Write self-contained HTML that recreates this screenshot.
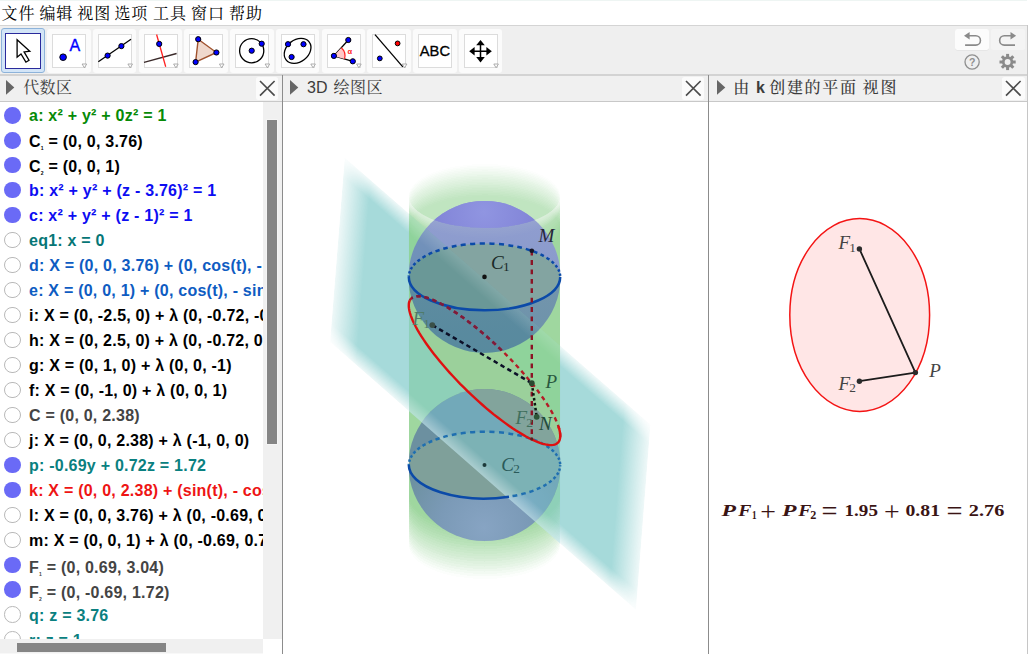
<!DOCTYPE html><html><head><meta charset="utf-8"><title>GeoGebra</title><style>
html,body{margin:0;padding:0;background:#fff;}
body{width:1029px;height:654px;overflow:hidden;position:relative;font-family:"Liberation Sans",sans-serif;}
.abs{position:absolute;}
#menu{position:absolute;left:0;top:0;width:1029px;height:25px;background:#fff;}
#menu span{position:absolute;top:2px;font:16px/24px "Liberation Sans","Noto Serif CJK SC",serif;color:#000;white-space:nowrap;letter-spacing:0.9px;margin-left:-1px}
#tb{position:absolute;left:0;top:25px;width:1027px;height:51px;background:#efefef;border-top:1px solid #d4d4d4;border-bottom:2px solid #d3d3d3;box-sizing:border-box;}
.btn{position:absolute;top:28.5px;width:43.5px;height:44.5px;background:#fbfbfb;border-radius:3px;box-sizing:border-box;}
.btn .in{position:absolute;left:5px;top:5.5px;width:34px;height:34px;box-sizing:border-box;border:1px solid #dcdcdc;background:#fff;}
.btn.sel{background:#d3e5f7;border:1px solid #8db3da;margin-left:-0.5px;width:44.5px;top:28.2px;height:45.2px;}
.btn.sel .in{left:3.4px;top:3.5px;width:35.8px;height:36px;border:1.75px solid #2a2a9c;}
.hdr{position:absolute;top:76px;height:25px;background:#f0f0f0;border-bottom:1px solid #c8c8c8;box-sizing:content-box;}
.hdr .t{position:absolute;top:0;font:16px/24px "Liberation Sans","Noto Serif CJK SC",serif;color:#3c3c3c;white-space:nowrap;}
.xb{position:absolute;top:77px;width:22.5px;height:22.5px;background:#fbfbfb;border-radius:2.5px;}
.row{position:absolute;left:29px;font:bold 16px/20px "Liberation Sans",sans-serif;white-space:nowrap;letter-spacing:0.23px;}
.row sub{font-size:5px;line-height:0;vertical-align:-3px;font-weight:bold;}
.mk{position:absolute;left:4px;width:16.5px;height:16.5px;border-radius:50%;box-sizing:border-box;}
.mk.on{background:#6a6af6;}
.mk.off{background:#fff;border:1.3px solid #b9b9b9;}
</style></head><body>
<div id="menu"><span style="left:2.5px">文件</span><span style="left:40.4px">编辑</span><span style="left:78.3px">视图</span><span style="left:115.4px">选项</span><span style="left:154px">工具</span><span style="left:192px">窗口</span><span style="left:230px">帮助</span></div>
<div id="tb"></div>
<div class="abs" style="left:0;top:0;width:1027px;height:1px;background:#eef5f3"></div>
<div class="btn sel" style="left:1.2px"><div class="in"></div></div>
<div class="btn" style="left:47.0px"><div class="in"></div></div>
<div class="btn" style="left:92.8px"><div class="in"></div></div>
<div class="btn" style="left:138.5px"><div class="in"></div></div>
<div class="btn" style="left:184.2px"><div class="in"></div></div>
<div class="btn" style="left:230.0px"><div class="in"></div></div>
<div class="btn" style="left:275.8px"><div class="in"></div></div>
<div class="btn" style="left:321.5px"><div class="in"></div></div>
<div class="btn" style="left:367.2px"><div class="in"></div></div>
<div class="btn" style="left:413.0px"><div class="in"></div></div>
<div class="btn" style="left:458.8px"><div class="in"></div></div>
<svg class="abs" style="left:0;top:0" width="520" height="76" viewBox="0 0 520 76"><path d="M17.1 39.8V57.2L21 53.9L25.9 62.2L29 60.2L24.1 51.9L29.8 51.2Z" fill="#fff" stroke="#000" stroke-width="1.3" stroke-linejoin="miter"/><circle cx="63.1" cy="57.2" r="3.3" fill="#0000ff" stroke="#000" stroke-width="1"/><text x="69.4" y="50.9" font-family='"Liberation Sans", sans-serif' font-size="16" fill="#0000ff" stroke="#0000ff" stroke-width="0.35">A</text><path d="M82.1 64.0h4.6l-2.3 3.8z" fill="#fff" stroke="#9a9a9a" stroke-width="0.8"/><path d="M98.3 61.8L131 39.2" stroke="#000" stroke-width="1.25"/><circle cx="107.6" cy="55.6" r="2.6" fill="#0000ff" stroke="#000" stroke-width="1"/><circle cx="121.4" cy="46.1" r="2.6" fill="#0000ff" stroke="#000" stroke-width="1"/><path d="M127.9 64.0h4.6l-2.3 3.8z" fill="#fff" stroke="#9a9a9a" stroke-width="0.8"/><path d="M144 62.4L176.6 53.5" stroke="#3a2a2a" stroke-width="1.3"/><path d="M156.6 34.5L165.7 66.8" stroke="#ff2020" stroke-width="1.3"/><circle cx="159.2" cy="43.9" r="2.6" fill="#0000ff" stroke="#000" stroke-width="1"/><path d="M173.6 64.0h4.6l-2.3 3.8z" fill="#fff" stroke="#9a9a9a" stroke-width="0.8"/><path d="M198.2 39.2L216.4 52.5L195.6 62.1Z" fill="#efd8cc" stroke="#a0522d" stroke-width="1.4"/><circle cx="198.2" cy="39.2" r="2.6" fill="#0000ff" stroke="#000" stroke-width="1"/><circle cx="216.4" cy="52.5" r="2.6" fill="#0000ff" stroke="#000" stroke-width="1"/><circle cx="195.6" cy="62.1" r="2.6" fill="#0000ff" stroke="#000" stroke-width="1"/><path d="M219.4 64.0h4.6l-2.3 3.8z" fill="#fff" stroke="#9a9a9a" stroke-width="0.8"/><circle cx="251.7" cy="50.7" r="12.1" fill="none" stroke="#000" stroke-width="1.3"/><circle cx="251.7" cy="50.7" r="2.6" fill="#0000ff" stroke="#000" stroke-width="1"/><circle cx="261.7" cy="43.7" r="2.6" fill="#0000ff" stroke="#000" stroke-width="1"/><path d="M265.1 64.0h4.6l-2.3 3.8z" fill="#fff" stroke="#9a9a9a" stroke-width="0.8"/><ellipse cx="297.6" cy="50.8" rx="14.6" ry="11" transform="rotate(-38 297.6 50.8)" fill="none" stroke="#000" stroke-width="1.3"/><circle cx="288" cy="44.2" r="2.6" fill="#0000ff" stroke="#000" stroke-width="1"/><circle cx="303.5" cy="44.2" r="2.6" fill="#0000ff" stroke="#000" stroke-width="1"/><circle cx="291.6" cy="57" r="2.6" fill="#0000ff" stroke="#000" stroke-width="1"/><path d="M310.8 64.0h4.6l-2.3 3.8z" fill="#fff" stroke="#9a9a9a" stroke-width="0.8"/><path d="M333.9 55.9L348.3 40" stroke="#000" stroke-width="1.3"/><path d="M333.9 55.9L352.8 61.3" stroke="#000" stroke-width="1.3"/><path d="M333.9 55.9L341.3 47.7A11 11 0 0 1 344.5 58.9Z" fill="#ffc8c8" stroke="none"/><path d="M341.3 47.7A11 11 0 0 1 344.5 58.9" fill="none" stroke="#ff2020" stroke-width="1.2"/><circle cx="333.9" cy="55.9" r="2.6" fill="#0000ff" stroke="#000" stroke-width="1"/><circle cx="348.3" cy="40" r="2.6" fill="#0000ff" stroke="#000" stroke-width="1"/><circle cx="352.8" cy="61.3" r="2.6" fill="#0000ff" stroke="#000" stroke-width="1"/><text x="347.6" y="53.8" font-family='"Liberation Sans", sans-serif' font-size="7.5" font-weight="bold" fill="#ff2020">α</text><path d="M356.6 64.0h4.6l-2.3 3.8z" fill="#fff" stroke="#9a9a9a" stroke-width="0.8"/><path d="M375 34.6L402.8 66.8" stroke="#000" stroke-width="1.3"/><circle cx="397.6" cy="43.4" r="2.4" fill="#ff0000" stroke="#000" stroke-width="1"/><circle cx="379.8" cy="58.4" r="2.4" fill="#0000ff" stroke="#000" stroke-width="1"/><path d="M402.3 64.0h4.6l-2.3 3.8z" fill="#fff" stroke="#9a9a9a" stroke-width="0.8"/><text x="419.8" y="56.2" font-family='"Liberation Sans", sans-serif' font-size="14.6" fill="#000" textLength="30.2" lengthAdjust="spacingAndGlyphs" stroke="#000" stroke-width="0.3">ABC</text><path d="M472.5 51.2H488.5M480.5 43.2V59.2" stroke="#000" stroke-width="1.5"/><path d="M491.8 51.2l-5.4 -4.3v8.6z" fill="#000" transform="rotate(0 480.5 51.2)"/><path d="M491.8 51.2l-5.4 -4.3v8.6z" fill="#000" transform="rotate(90 480.5 51.2)"/><path d="M491.8 51.2l-5.4 -4.3v8.6z" fill="#000" transform="rotate(180 480.5 51.2)"/><path d="M491.8 51.2l-5.4 -4.3v8.6z" fill="#000" transform="rotate(270 480.5 51.2)"/><path d="M493.8 64.0h4.6l-2.3 3.8z" fill="#fff" stroke="#9a9a9a" stroke-width="0.8"/></svg>
<div class="abs" style="left:955.3px;top:28.5px;width:33.8px;height:21.5px;background:#fcfcfc;border-radius:2.5px;box-shadow:0 0.5px 0.5px #ddd"></div>
<div class="abs" style="left:991.2px;top:28.5px;width:33.8px;height:21.5px;background:#f4f4f4;border-radius:2.5px;"></div>
<svg class="abs" style="left:0;top:0" width="1029" height="76" viewBox="0 0 1029 76"><path d="M966.5 35.8H975.8A4.65 4.65 0 0 1 975.8 45.1H965.1" fill="none" stroke="#8a8a8a" stroke-width="1.6"/><path d="M969.6 32V39.6L964 35.8Z" fill="#8a8a8a"/><path d="M1013.6 35.8H1004.3A4.65 4.65 0 0 0 1004.3 45.1H1015" fill="none" stroke="#8a8a8a" stroke-width="1.6"/><path d="M1010.5 32V39.6L1016.1 35.8Z" fill="#8a8a8a"/><circle cx="972.1" cy="62" r="7.1" fill="none" stroke="#8f8f8f" stroke-width="1.3"/><text x="972.1" y="65.8" text-anchor="middle" font-family='"Liberation Sans", sans-serif' font-size="10.5" font-weight="bold" fill="#8f8f8f">?</text><circle cx="1007.6" cy="62" r="4.3" fill="none" stroke="#8a8a8a" stroke-width="2.7"/><rect x="1006.1" y="53.9" width="3" height="3.4" fill="#8a8a8a" transform="rotate(0 1007.6 62)"/><rect x="1006.1" y="53.9" width="3" height="3.4" fill="#8a8a8a" transform="rotate(45 1007.6 62)"/><rect x="1006.1" y="53.9" width="3" height="3.4" fill="#8a8a8a" transform="rotate(90 1007.6 62)"/><rect x="1006.1" y="53.9" width="3" height="3.4" fill="#8a8a8a" transform="rotate(135 1007.6 62)"/><rect x="1006.1" y="53.9" width="3" height="3.4" fill="#8a8a8a" transform="rotate(180 1007.6 62)"/><rect x="1006.1" y="53.9" width="3" height="3.4" fill="#8a8a8a" transform="rotate(225 1007.6 62)"/><rect x="1006.1" y="53.9" width="3" height="3.4" fill="#8a8a8a" transform="rotate(270 1007.6 62)"/><rect x="1006.1" y="53.9" width="3" height="3.4" fill="#8a8a8a" transform="rotate(315 1007.6 62)"/></svg>
<div class="hdr" style="left:0;width:282px"><svg class="abs" style="left:5.9px;top:3.8px" width="9" height="16"><path d="M0 0L8.3 7.4L0 14.8Z" fill="#666"/></svg><span class="t" style="left:23.2px;letter-spacing:0.4px">代数区</span></div>
<div class="xb" style="left:255.6px"></div><svg class="abs" style="left:255.6px;top:77px" width="22.5" height="22.5"><path d="M4 4L18.6 18.6M18.6 4L4 18.6" stroke="#4c4c4c" stroke-width="1.65" fill="none"/></svg>
<div class="hdr" style="left:283px;width:425px"><svg class="abs" style="left:7.2px;top:3.8px" width="9" height="16"><path d="M0 0L8.3 7.4L0 14.8Z" fill="#666"/></svg><span class="t" style="left:24px">3D</span><span class="t" style="left:50.6px;letter-spacing:0.4px">绘图区</span></div>
<div class="xb" style="left:681.9px"></div><svg class="abs" style="left:681.9px;top:77px" width="22.5" height="22.5"><path d="M4 4L18.6 18.6M18.6 4L4 18.6" stroke="#4c4c4c" stroke-width="1.65" fill="none"/></svg>
<div class="hdr" style="left:709px;width:318px"><svg class="abs" style="left:7.8px;top:3.8px" width="9" height="16"><path d="M0 0L8.3 7.4L0 14.8Z" fill="#666"/></svg><span class="t" style="left:24.3px;font-weight:500;letter-spacing:1.3px">由</span><span class="t" style="left:46.9px"><b>k</b></span><span class="t" style="left:60.3px;font-weight:500;letter-spacing:1.65px">创建的平面</span><span class="t" style="left:153.6px;font-weight:500;letter-spacing:1.9px">视图</span></div>
<div class="xb" style="left:1002.3px"></div><svg class="abs" style="left:1002.3px;top:77px" width="22.5" height="22.5"><path d="M4 4L18.6 18.6M18.6 4L4 18.6" stroke="#4c4c4c" stroke-width="1.65" fill="none"/></svg>
<div class="abs" style="left:282px;top:75px;width:1.2px;height:579px;background:#8c8c8c"></div>
<div class="abs" style="left:707.8px;top:75px;width:1.2px;height:579px;background:#8c8c8c"></div>
<div class="abs" style="left:1027.1px;top:25px;width:1.2px;height:629px;background:#c6c6c6"></div>
<div class="abs" style="left:0;top:102px;width:263px;height:537px;overflow:hidden;background:#fff"><div class="mk on" style="top:5.05px"></div><div class="row" style="top:4.20px;color:#078a07">a: x² + y² + 0z² = 1</div><div class="mk on" style="top:30.02px"></div><div class="row" style="top:29.67px;color:#000">C<sub>1</sub> = (0, 0, 3.76)</div><div class="mk on" style="top:54.99px"></div><div class="row" style="top:54.64px;color:#000">C<sub>2</sub> = (0, 0, 1)</div><div class="mk on" style="top:79.96px"></div><div class="row" style="top:79.11px;color:#0d0df2">b: x² + y² + (z - 3.76)² = 1</div><div class="mk on" style="top:104.93px"></div><div class="row" style="top:104.08px;color:#0d0df2">c: x² + y² + (z - 1)² = 1</div><div class="mk off" style="top:129.90px"></div><div class="row" style="top:129.05px;color:#067676">eq1: x = 0</div><div class="mk off" style="top:154.87px"></div><div class="row" style="top:154.02px;color:#0e5cc2">d: X = (0, 0, 3.76) + (0, cos(t), - sin(t))</div><div class="mk off" style="top:179.84px"></div><div class="row" style="top:178.99px;color:#0e5cc2">e: X = (0, 0, 1) + (0, cos(t), - sin(t))</div><div class="mk off" style="top:204.81px"></div><div class="row" style="top:203.96px;color:#000">i: X = (0, -2.5, 0) + λ (0, -0.72, -0.69)</div><div class="mk off" style="top:229.78px"></div><div class="row" style="top:228.93px;color:#000">h: X = (0, 2.5, 0) + λ (0, -0.72, 0.69)</div><div class="mk off" style="top:254.75px"></div><div class="row" style="top:253.90px;color:#000">g: X = (0, 1, 0) + λ (0, 0, -1)</div><div class="mk off" style="top:279.72px"></div><div class="row" style="top:278.87px;color:#000">f: X = (0, -1, 0) + λ (0, 0, 1)</div><div class="mk off" style="top:304.69px"></div><div class="row" style="top:303.84px;color:#444">C = (0, 0, 2.38)</div><div class="mk off" style="top:329.66px"></div><div class="row" style="top:328.81px;color:#000">j: X = (0, 0, 2.38) + λ (-1, 0, 0)</div><div class="mk on" style="top:354.63px"></div><div class="row" style="top:353.78px;color:#0a8080">p: -0.69y + 0.72z = 1.72</div><div class="mk on" style="top:379.60px"></div><div class="row" style="top:378.75px;color:#ee1414">k: X = (0, 0, 2.38) + (sin(t), - cos(t), - 0.96cos(t))</div><div class="mk off" style="top:404.57px"></div><div class="row" style="top:403.72px;color:#000">l: X = (0, 0, 3.76) + λ (0, -0.69, 0.72)</div><div class="mk off" style="top:429.54px"></div><div class="row" style="top:428.69px;color:#000">m: X = (0, 0, 1) + λ (0, -0.69, 0.72)</div><div class="mk on" style="top:454.51px"></div><div class="row" style="top:455.86px;color:#444">F<sub>1</sub> = (0, 0.69, 3.04)</div><div class="mk on" style="top:479.48px"></div><div class="row" style="top:480.83px;color:#444">F<sub>2</sub> = (0, -0.69, 1.72)</div><div class="mk off" style="top:504.45px"></div><div class="row" style="top:503.60px;color:#0a8080">q: z = 3.76</div><div class="mk off" style="top:529.42px"></div><div class="row" style="top:528.57px;color:#0a8080">r: z = 1</div></div>
<div class="abs" style="left:263px;top:102px;width:18.8px;height:536.5px;background:#f0f0f0"></div>
<div class="abs" style="left:267px;top:120px;width:9.9px;height:324px;background:#858585;box-shadow:0 0 0 0.7px #f7f7f7"></div>
<div class="abs" style="left:0;top:639px;width:263px;height:13.5px;background:#f0f0f0"></div>
<div class="abs" style="left:0;top:652.5px;width:263px;height:1.5px;background:#f8f8f8"></div>
<div class="abs" style="left:16.6px;top:643px;width:149.6px;height:9px;background:#858585"></div>
<svg class="abs" style="left:283px;top:102px" width="425" height="552" viewBox="283 102 425 552"><defs><linearGradient id="pf1" gradientUnits="userSpaceOnUse" x1="344.7" y1="157.4" x2="334.8" y2="168.7"><stop offset="0" stop-color="#000" stop-opacity="0.82"/><stop offset="1" stop-color="#000" stop-opacity="0"/></linearGradient><linearGradient id="pf2" gradientUnits="userSpaceOnUse" x1="650.5" y1="424.6" x2="622.6" y2="422.4"><stop offset="0" stop-color="#000" stop-opacity="0.82"/><stop offset="1" stop-color="#000" stop-opacity="0"/></linearGradient><linearGradient id="pf3" gradientUnits="userSpaceOnUse" x1="636.0" y1="610.0" x2="645.9" y2="598.7"><stop offset="0" stop-color="#000" stop-opacity="0.82"/><stop offset="1" stop-color="#000" stop-opacity="0"/></linearGradient><linearGradient id="pf4" gradientUnits="userSpaceOnUse" x1="330.0" y1="342.0" x2="357.9" y2="344.2"><stop offset="0" stop-color="#000" stop-opacity="0.82"/><stop offset="1" stop-color="#000" stop-opacity="0"/></linearGradient><mask id="pm" maskUnits="userSpaceOnUse" x="300" y="120" width="400" height="520"><polygon points="344.7,157.4 650.5,424.6 636.0,610.0 330.0,342.0" fill="#fff"/><polygon points="316.6,128.8 682.6,448.7 670.8,462.2 304.7,142.4" fill="url(#pf1)"/><polygon points="656.6,385.0 635.9,650.1 605.0,647.7 625.7,382.5" fill="url(#pf2)"/><polygon points="664.1,638.6 297.9,317.9 309.8,304.4 676.0,625.1" fill="url(#pf3)"/><polygon points="323.8,381.6 344.9,117.3 375.8,119.7 354.7,384.1" fill="url(#pf4)"/></mask><clipPath id="pc"><path clip-rule="evenodd" d="M300 120H700V640H300ZM409 120H560V640H409Z"/></clipPath><clipPath id="s1"><circle cx="484.5" cy="276.9" r="76.0"/></clipPath><clipPath id="s2"><circle cx="484.5" cy="465.1" r="76.0"/></clipPath><clipPath id="ns"><path clip-rule="evenodd" d="M408.8 150H560.2V600H408.8ZM408.5 276.9a76.0 76.0 0 1 0 152.0 0a76.0 76.0 0 1 0 -152.0 0ZM408.5 465.1a76.0 76.0 0 1 0 152.0 0a76.0 76.0 0 1 0 -152.0 0Z"/></clipPath><clipPath id="cc"><rect x="408.8" y="150" width="151.4" height="450"/></clipPath><linearGradient id="g1" x1="0" y1="0" x2="0" y2="1"><stop offset="0.1" stop-color="#909dd0"/><stop offset="0.44" stop-color="#8a9bcb"/><stop offset="0.56" stop-color="#7395ac"/><stop offset="1" stop-color="#6c92aa"/></linearGradient><radialGradient id="gcap" gradientUnits="userSpaceOnUse" cx="484" cy="212" r="70"><stop offset="0" stop-color="#9095e1"/><stop offset="0.6" stop-color="#8487d9"/><stop offset="1" stop-color="#7b7cd2"/></radialGradient><radialGradient id="g2" gradientUnits="userSpaceOnUse" cx="484" cy="528" r="88"><stop offset="0" stop-color="#87a4c3"/><stop offset="0.5" stop-color="#7b9ab7"/><stop offset="1" stop-color="#6c90a0"/></radialGradient><linearGradient id="s1g" gradientUnits="userSpaceOnUse" x1="330.0" y1="342.0" x2="339.2" y2="331.5"><stop offset="0" stop-color="#fff" stop-opacity="0.36"/><stop offset="1" stop-color="#fff" stop-opacity="0"/></linearGradient><linearGradient id="s2g" gradientUnits="userSpaceOnUse" x1="344.7" y1="157.4" x2="335.5" y2="167.9"><stop offset="0" stop-color="#fff" stop-opacity="0.15"/><stop offset="1" stop-color="#fff" stop-opacity="0"/></linearGradient></defs><g clip-path="url(#pc)"><polygon points="344.7,157.4 650.5,424.6 636.0,610.0 330.0,342.0" fill="rgb(0,150,150)" fill-opacity="0.35" mask="url(#pm)"/></g><g fill="rgb(0,148,0)" shape-rendering="crispEdges"><path fill-opacity="0.0062" d="M408.8 196.00A75.7 32.0 0 0 1 560.2 196.0V197.60A75.7 32.0 0 0 0 408.8 197.6Z"/><path fill-opacity="0.0062" d="M408.8 542.50A75.7 34.0 0 0 0 560.2 542.5V545.00A75.7 34.0 0 0 1 408.8 545.0Z"/><path fill-opacity="0.0185" d="M408.8 197.60A75.7 32.0 0 0 1 560.2 197.6V199.20A75.7 32.0 0 0 0 408.8 199.2Z"/><path fill-opacity="0.0185" d="M408.8 540.00A75.7 34.0 0 0 0 560.2 540.0V542.50A75.7 34.0 0 0 1 408.8 542.5Z"/><path fill-opacity="0.0309" d="M408.8 199.20A75.7 32.0 0 0 1 560.2 199.2V200.80A75.7 32.0 0 0 0 408.8 200.8Z"/><path fill-opacity="0.0309" d="M408.8 537.50A75.7 34.0 0 0 0 560.2 537.5V540.00A75.7 34.0 0 0 1 408.8 540.0Z"/><path fill-opacity="0.0432" d="M408.8 200.80A75.7 32.0 0 0 1 560.2 200.8V202.40A75.7 32.0 0 0 0 408.8 202.4Z"/><path fill-opacity="0.0432" d="M408.8 535.00A75.7 34.0 0 0 0 560.2 535.0V537.50A75.7 34.0 0 0 1 408.8 537.5Z"/><path fill-opacity="0.0556" d="M408.8 202.40A75.7 32.0 0 0 1 560.2 202.4V204.00A75.7 32.0 0 0 0 408.8 204.0Z"/><path fill-opacity="0.0556" d="M408.8 532.50A75.7 34.0 0 0 0 560.2 532.5V535.00A75.7 34.0 0 0 1 408.8 535.0Z"/><path fill-opacity="0.0679" d="M408.8 204.00A75.7 32.0 0 0 1 560.2 204.0V205.60A75.7 32.0 0 0 0 408.8 205.6Z"/><path fill-opacity="0.0679" d="M408.8 530.00A75.7 34.0 0 0 0 560.2 530.0V532.50A75.7 34.0 0 0 1 408.8 532.5Z"/><path fill-opacity="0.0803" d="M408.8 205.60A75.7 32.0 0 0 1 560.2 205.6V207.20A75.7 32.0 0 0 0 408.8 207.2Z"/><path fill-opacity="0.0803" d="M408.8 527.50A75.7 34.0 0 0 0 560.2 527.5V530.00A75.7 34.0 0 0 1 408.8 530.0Z"/><path fill-opacity="0.0926" d="M408.8 207.20A75.7 32.0 0 0 1 560.2 207.2V208.80A75.7 32.0 0 0 0 408.8 208.8Z"/><path fill-opacity="0.0926" d="M408.8 525.00A75.7 34.0 0 0 0 560.2 525.0V527.50A75.7 34.0 0 0 1 408.8 527.5Z"/><path fill-opacity="0.1050" d="M408.8 208.80A75.7 32.0 0 0 1 560.2 208.8V210.40A75.7 32.0 0 0 0 408.8 210.4Z"/><path fill-opacity="0.1050" d="M408.8 522.50A75.7 34.0 0 0 0 560.2 522.5V525.00A75.7 34.0 0 0 1 408.8 525.0Z"/><path fill-opacity="0.1173" d="M408.8 210.40A75.7 32.0 0 0 1 560.2 210.4V212.00A75.7 32.0 0 0 0 408.8 212.0Z"/><path fill-opacity="0.1173" d="M408.8 520.00A75.7 34.0 0 0 0 560.2 520.0V522.50A75.7 34.0 0 0 1 408.8 522.5Z"/><path fill-opacity="0.1297" d="M408.8 212.00A75.7 32.0 0 0 1 560.2 212.0V213.60A75.7 32.0 0 0 0 408.8 213.6Z"/><path fill-opacity="0.1297" d="M408.8 517.50A75.7 34.0 0 0 0 560.2 517.5V520.00A75.7 34.0 0 0 1 408.8 520.0Z"/><path fill-opacity="0.1420" d="M408.8 213.60A75.7 32.0 0 0 1 560.2 213.6V215.20A75.7 32.0 0 0 0 408.8 215.2Z"/><path fill-opacity="0.1420" d="M408.8 515.00A75.7 34.0 0 0 0 560.2 515.0V517.50A75.7 34.0 0 0 1 408.8 517.5Z"/><path fill-opacity="0.1544" d="M408.8 215.20A75.7 32.0 0 0 1 560.2 215.2V216.80A75.7 32.0 0 0 0 408.8 216.8Z"/><path fill-opacity="0.1544" d="M408.8 512.50A75.7 34.0 0 0 0 560.2 512.5V515.00A75.7 34.0 0 0 1 408.8 515.0Z"/><path fill-opacity="0.1667" d="M408.8 216.80A75.7 32.0 0 0 1 560.2 216.8V218.40A75.7 32.0 0 0 0 408.8 218.4Z"/><path fill-opacity="0.1667" d="M408.8 510.00A75.7 34.0 0 0 0 560.2 510.0V512.50A75.7 34.0 0 0 1 408.8 512.5Z"/><path fill-opacity="0.1791" d="M408.8 218.40A75.7 32.0 0 0 1 560.2 218.4V220.00A75.7 32.0 0 0 0 408.8 220.0Z"/><path fill-opacity="0.1791" d="M408.8 507.50A75.7 34.0 0 0 0 560.2 507.5V510.00A75.7 34.0 0 0 1 408.8 510.0Z"/><path fill-opacity="0.1914" d="M408.8 220.00A75.7 32.0 0 0 1 560.2 220.0V221.60A75.7 32.0 0 0 0 408.8 221.6Z"/><path fill-opacity="0.1914" d="M408.8 505.00A75.7 34.0 0 0 0 560.2 505.0V507.50A75.7 34.0 0 0 1 408.8 507.5Z"/><path fill-opacity="0.2038" d="M408.8 221.60A75.7 32.0 0 0 1 560.2 221.6V223.20A75.7 32.0 0 0 0 408.8 223.2Z"/><path fill-opacity="0.2038" d="M408.8 502.50A75.7 34.0 0 0 0 560.2 502.5V505.00A75.7 34.0 0 0 1 408.8 505.0Z"/><path fill-opacity="0.2161" d="M408.8 223.20A75.7 32.0 0 0 1 560.2 223.2V224.80A75.7 32.0 0 0 0 408.8 224.8Z"/><path fill-opacity="0.2161" d="M408.8 500.00A75.7 34.0 0 0 0 560.2 500.0V502.50A75.7 34.0 0 0 1 408.8 502.5Z"/><path fill-opacity="0.2285" d="M408.8 224.80A75.7 32.0 0 0 1 560.2 224.8V226.40A75.7 32.0 0 0 0 408.8 226.4Z"/><path fill-opacity="0.2285" d="M408.8 497.50A75.7 34.0 0 0 0 560.2 497.5V500.00A75.7 34.0 0 0 1 408.8 500.0Z"/><path fill-opacity="0.2408" d="M408.8 226.40A75.7 32.0 0 0 1 560.2 226.4V228.00A75.7 32.0 0 0 0 408.8 228.0Z"/><path fill-opacity="0.2408" d="M408.8 495.00A75.7 34.0 0 0 0 560.2 495.0V497.50A75.7 34.0 0 0 1 408.8 497.5Z"/><path fill-opacity="0.2470" d="M408.8 228.00A75.7 32.0 0 0 1 560.2 228.0V495.00A75.7 34.0 0 0 1 408.8 495.0Z"/></g><g fill="rgb(0,148,0)" shape-rendering="crispEdges"><path fill-opacity="0.0042" d="M408.8 196.00A75.7 32.0 0 0 0 560.2 196.0V197.60A75.7 32.0 0 0 1 408.8 197.6Z"/><path fill-opacity="0.0042" d="M408.8 542.50A75.7 34.0 0 0 0 560.2 542.5V545.00A75.7 34.0 0 0 1 408.8 545.0Z"/><path fill-opacity="0.0125" d="M408.8 197.60A75.7 32.0 0 0 0 560.2 197.6V199.20A75.7 32.0 0 0 1 408.8 199.2Z"/><path fill-opacity="0.0125" d="M408.8 540.00A75.7 34.0 0 0 0 560.2 540.0V542.50A75.7 34.0 0 0 1 408.8 542.5Z"/><path fill-opacity="0.0209" d="M408.8 199.20A75.7 32.0 0 0 0 560.2 199.2V200.80A75.7 32.0 0 0 1 408.8 200.8Z"/><path fill-opacity="0.0209" d="M408.8 537.50A75.7 34.0 0 0 0 560.2 537.5V540.00A75.7 34.0 0 0 1 408.8 540.0Z"/><path fill-opacity="0.0292" d="M408.8 200.80A75.7 32.0 0 0 0 560.2 200.8V202.40A75.7 32.0 0 0 1 408.8 202.4Z"/><path fill-opacity="0.0292" d="M408.8 535.00A75.7 34.0 0 0 0 560.2 535.0V537.50A75.7 34.0 0 0 1 408.8 537.5Z"/><path fill-opacity="0.0376" d="M408.8 202.40A75.7 32.0 0 0 0 560.2 202.4V204.00A75.7 32.0 0 0 1 408.8 204.0Z"/><path fill-opacity="0.0376" d="M408.8 532.50A75.7 34.0 0 0 0 560.2 532.5V535.00A75.7 34.0 0 0 1 408.8 535.0Z"/><path fill-opacity="0.0459" d="M408.8 204.00A75.7 32.0 0 0 0 560.2 204.0V205.60A75.7 32.0 0 0 1 408.8 205.6Z"/><path fill-opacity="0.0459" d="M408.8 530.00A75.7 34.0 0 0 0 560.2 530.0V532.50A75.7 34.0 0 0 1 408.8 532.5Z"/><path fill-opacity="0.0543" d="M408.8 205.60A75.7 32.0 0 0 0 560.2 205.6V207.20A75.7 32.0 0 0 1 408.8 207.2Z"/><path fill-opacity="0.0543" d="M408.8 527.50A75.7 34.0 0 0 0 560.2 527.5V530.00A75.7 34.0 0 0 1 408.8 530.0Z"/><path fill-opacity="0.0626" d="M408.8 207.20A75.7 32.0 0 0 0 560.2 207.2V208.80A75.7 32.0 0 0 1 408.8 208.8Z"/><path fill-opacity="0.0626" d="M408.8 525.00A75.7 34.0 0 0 0 560.2 525.0V527.50A75.7 34.0 0 0 1 408.8 527.5Z"/><path fill-opacity="0.0710" d="M408.8 208.80A75.7 32.0 0 0 0 560.2 208.8V210.40A75.7 32.0 0 0 1 408.8 210.4Z"/><path fill-opacity="0.0710" d="M408.8 522.50A75.7 34.0 0 0 0 560.2 522.5V525.00A75.7 34.0 0 0 1 408.8 525.0Z"/><path fill-opacity="0.0793" d="M408.8 210.40A75.7 32.0 0 0 0 560.2 210.4V212.00A75.7 32.0 0 0 1 408.8 212.0Z"/><path fill-opacity="0.0793" d="M408.8 520.00A75.7 34.0 0 0 0 560.2 520.0V522.50A75.7 34.0 0 0 1 408.8 522.5Z"/><path fill-opacity="0.0877" d="M408.8 212.00A75.7 32.0 0 0 0 560.2 212.0V213.60A75.7 32.0 0 0 1 408.8 213.6Z"/><path fill-opacity="0.0877" d="M408.8 517.50A75.7 34.0 0 0 0 560.2 517.5V520.00A75.7 34.0 0 0 1 408.8 520.0Z"/><path fill-opacity="0.0960" d="M408.8 213.60A75.7 32.0 0 0 0 560.2 213.6V215.20A75.7 32.0 0 0 1 408.8 215.2Z"/><path fill-opacity="0.0960" d="M408.8 515.00A75.7 34.0 0 0 0 560.2 515.0V517.50A75.7 34.0 0 0 1 408.8 517.5Z"/><path fill-opacity="0.1044" d="M408.8 215.20A75.7 32.0 0 0 0 560.2 215.2V216.80A75.7 32.0 0 0 1 408.8 216.8Z"/><path fill-opacity="0.1044" d="M408.8 512.50A75.7 34.0 0 0 0 560.2 512.5V515.00A75.7 34.0 0 0 1 408.8 515.0Z"/><path fill-opacity="0.1127" d="M408.8 216.80A75.7 32.0 0 0 0 560.2 216.8V218.40A75.7 32.0 0 0 1 408.8 218.4Z"/><path fill-opacity="0.1127" d="M408.8 510.00A75.7 34.0 0 0 0 560.2 510.0V512.50A75.7 34.0 0 0 1 408.8 512.5Z"/><path fill-opacity="0.1211" d="M408.8 218.40A75.7 32.0 0 0 0 560.2 218.4V220.00A75.7 32.0 0 0 1 408.8 220.0Z"/><path fill-opacity="0.1211" d="M408.8 507.50A75.7 34.0 0 0 0 560.2 507.5V510.00A75.7 34.0 0 0 1 408.8 510.0Z"/><path fill-opacity="0.1294" d="M408.8 220.00A75.7 32.0 0 0 0 560.2 220.0V221.60A75.7 32.0 0 0 1 408.8 221.6Z"/><path fill-opacity="0.1294" d="M408.8 505.00A75.7 34.0 0 0 0 560.2 505.0V507.50A75.7 34.0 0 0 1 408.8 507.5Z"/><path fill-opacity="0.1378" d="M408.8 221.60A75.7 32.0 0 0 0 560.2 221.6V223.20A75.7 32.0 0 0 1 408.8 223.2Z"/><path fill-opacity="0.1378" d="M408.8 502.50A75.7 34.0 0 0 0 560.2 502.5V505.00A75.7 34.0 0 0 1 408.8 505.0Z"/><path fill-opacity="0.1461" d="M408.8 223.20A75.7 32.0 0 0 0 560.2 223.2V224.80A75.7 32.0 0 0 1 408.8 224.8Z"/><path fill-opacity="0.1461" d="M408.8 500.00A75.7 34.0 0 0 0 560.2 500.0V502.50A75.7 34.0 0 0 1 408.8 502.5Z"/><path fill-opacity="0.1545" d="M408.8 224.80A75.7 32.0 0 0 0 560.2 224.8V226.40A75.7 32.0 0 0 1 408.8 226.4Z"/><path fill-opacity="0.1545" d="M408.8 497.50A75.7 34.0 0 0 0 560.2 497.5V500.00A75.7 34.0 0 0 1 408.8 500.0Z"/><path fill-opacity="0.1628" d="M408.8 226.40A75.7 32.0 0 0 0 560.2 226.4V228.00A75.7 32.0 0 0 1 408.8 228.0Z"/><path fill-opacity="0.1628" d="M408.8 495.00A75.7 34.0 0 0 0 560.2 495.0V497.50A75.7 34.0 0 0 1 408.8 497.5Z"/><path fill-opacity="0.1670" d="M408.8 228.00A75.7 32.0 0 0 0 560.2 228.0V495.00A75.7 34.0 0 0 1 408.8 495.0Z"/></g><g fill="#fff" fill-opacity="0.095"><path d="M408.8 196.0A75.7 32.0 0 0 0 560.2 196.0V197.7A75.7 32.0 0 0 1 408.8 197.7Z"/><path d="M408.8 196.0A75.7 32.0 0 0 0 560.2 196.0V199.4A75.7 32.0 0 0 1 408.8 199.4Z"/><path d="M408.8 196.0A75.7 32.0 0 0 0 560.2 196.0V201.1A75.7 32.0 0 0 1 408.8 201.1Z"/><path d="M408.8 196.0A75.7 32.0 0 0 0 560.2 196.0V202.8A75.7 32.0 0 0 1 408.8 202.8Z"/><path d="M408.8 196.0A75.7 32.0 0 0 0 560.2 196.0V204.5A75.7 32.0 0 0 1 408.8 204.5Z"/><path d="M408.8 196.0A75.7 32.0 0 0 0 560.2 196.0V206.2A75.7 32.0 0 0 1 408.8 206.2Z"/></g><g clip-path="url(#ns)"><path d="M408.8 213.4L560.2 345.7L560.2 437.2L560.3 435.3L560.1 433.3L559.7 431.1L559.2 428.8L558.4 426.3L557.4 423.6L556.2 420.8L554.9 417.8L553.3 414.8L551.6 411.6L549.6 408.3L547.5 404.8L545.2 401.3L542.8 397.7L540.1 394.1L537.4 390.3L534.5 386.6L531.4 382.7L528.2 378.9L524.9 375.0L521.5 371.1L518.0 367.2L514.4 363.3L510.7 359.4L507.0 355.6L503.2 351.8L499.3 348.1L495.4 344.4L491.5 340.8L487.5 337.2L483.5 333.8L479.6 330.5L475.6 327.2L471.7 324.1L467.8 321.2L464.0 318.3L460.2 315.6L456.5 313.1L452.8 310.7L449.2 308.4L445.8 306.4L442.4 304.5L439.2 302.8L436.1 301.3L433.1 300.0L430.3 298.8L427.6 297.9L425.0 297.2L422.6 296.7L420.4 296.3L418.4 296.2L416.6 296.3L414.9 296.6L413.4 297.0L412.2 297.7L411.1 298.6L410.2 299.7L409.5 301.0L409.1 302.5L408.8 304.1Z" fill="rgb(106,202,146)" fill-opacity="0.3"/><path d="M560.2 437.2L560.3 435.3L560.1 433.3L559.7 431.1L559.2 428.8L558.4 426.3L557.4 423.6L556.2 420.8L554.9 417.8L553.3 414.8L551.6 411.6L549.6 408.3L547.5 404.8L545.2 401.3L542.8 397.7L540.1 394.1L537.4 390.3L534.5 386.6L531.4 382.7L528.2 378.9L524.9 375.0L521.5 371.1L518.0 367.2L514.4 363.3L510.7 359.4L507.0 355.6L503.2 351.8L499.3 348.1L495.4 344.4L491.5 340.8L487.5 337.2L483.5 333.8L479.6 330.5L475.6 327.2L471.7 324.1L467.8 321.2L464.0 318.3L460.2 315.6L456.5 313.1L452.8 310.7L449.2 308.4L445.8 306.4L442.4 304.5L439.2 302.8L436.1 301.3L433.1 300.0L430.3 298.8L427.6 297.9L425.0 297.2L422.6 296.7L420.4 296.3L418.4 296.2L416.6 296.3L414.9 296.6L413.4 297.0L412.2 297.7L411.1 298.6L410.2 299.7L409.5 301.0L409.1 302.5L408.8 304.1L408.7 305.9L408.9 308.0L409.3 310.2L409.8 312.5L410.6 315.0L411.6 317.7L412.8 320.5L414.1 323.4L415.7 326.5L417.4 329.7L419.4 333.0L421.5 336.4L423.8 340.0L426.2 343.5L428.9 347.2L431.6 350.9L434.5 354.7L437.6 358.6L440.8 362.4L444.1 366.3L447.5 370.2L451.0 374.1L454.6 378.0L458.3 381.8L462.0 385.7L465.8 389.5L469.7 393.2L473.6 396.9L477.5 400.5L481.5 404.0L485.5 407.5L489.4 410.8L493.4 414.0L497.3 417.1L501.2 420.1L505.0 423.0L508.8 425.7L512.5 428.2L516.2 430.6L519.8 432.8L523.2 434.9L526.6 436.8L529.8 438.5L532.9 440.0L535.9 441.3L538.7 442.4L541.4 443.4L544.0 444.1L546.4 444.6L548.6 445.0L550.6 445.1L552.4 445.0L554.1 444.7L555.6 444.2L556.8 443.6L557.9 442.7L558.8 441.6L559.5 440.3L559.9 438.8Z" fill="rgb(140,180,140)" fill-opacity="0.2"/><path d="M408.8 304.1L408.7 305.9L408.9 308.0L409.3 310.2L409.8 312.5L410.6 315.0L411.6 317.7L412.8 320.5L414.1 323.4L415.7 326.5L417.4 329.7L419.4 333.0L421.5 336.4L423.8 340.0L426.2 343.5L428.9 347.2L431.6 350.9L434.5 354.7L437.6 358.6L440.8 362.4L444.1 366.3L447.5 370.2L451.0 374.1L454.6 378.0L458.3 381.8L462.0 385.7L465.8 389.5L469.7 393.2L473.6 396.9L477.5 400.5L481.5 404.0L485.5 407.5L489.4 410.8L493.4 414.0L497.3 417.1L501.2 420.1L505.0 423.0L508.8 425.7L512.5 428.2L516.2 430.6L519.8 432.8L523.2 434.9L526.6 436.8L529.8 438.5L532.9 440.0L535.9 441.3L538.7 442.4L541.4 443.4L544.0 444.1L546.4 444.6L548.6 445.0L550.6 445.1L552.4 445.0L554.1 444.7L555.6 444.2L556.8 443.6L557.9 442.7L558.8 441.6L559.5 440.3L559.9 438.8L560.2 437.2L560.2 543.6L408.8 411.0Z" fill="rgb(121,199,215)" fill-opacity="0.45"/></g><g clip-path="url(#s1)"><rect x="408.8" y="200.9" width="152.0" height="152.0" fill="url(#g1)"/><path d="M408.8 196.0A75.7 32.0 0 0 0 560.2 196.0V150H408.8Z" fill="url(#gcap)"/><ellipse cx="484.5" cy="276.9" rx="75.7" ry="33.4" fill="#83a4a1"/><path d="M408.8 213.4L560.2 345.7L560.2 600.0L408.8 600.0Z" fill="rgb(20,110,120)" fill-opacity="0.22"/></g><g fill="#fff" fill-opacity="0.014" clip-path="url(#s1)"><path d="M408.8 196.0A75.7 32.0 0 0 0 560.2 196.0V197.7A75.7 32.0 0 0 1 408.8 197.7Z"/><path d="M408.8 196.0A75.7 32.0 0 0 0 560.2 196.0V199.4A75.7 32.0 0 0 1 408.8 199.4Z"/><path d="M408.8 196.0A75.7 32.0 0 0 0 560.2 196.0V201.1A75.7 32.0 0 0 1 408.8 201.1Z"/><path d="M408.8 196.0A75.7 32.0 0 0 0 560.2 196.0V202.8A75.7 32.0 0 0 1 408.8 202.8Z"/><path d="M408.8 196.0A75.7 32.0 0 0 0 560.2 196.0V204.5A75.7 32.0 0 0 1 408.8 204.5Z"/><path d="M408.8 196.0A75.7 32.0 0 0 0 560.2 196.0V206.2A75.7 32.0 0 0 1 408.8 206.2Z"/></g><g clip-path="url(#s2)"><rect x="408.8" y="389.1" width="152.0" height="152.0" fill="url(#g2)"/><ellipse cx="484.5" cy="465.1" rx="75.7" ry="33.4" fill="#7fa09a"/><path d="M560.2 437.2L560.3 435.3L560.1 433.3L559.7 431.1L559.2 428.8L558.4 426.3L557.4 423.6L556.2 420.8L554.9 417.8L553.3 414.8L551.6 411.6L549.6 408.3L547.5 404.8L545.2 401.3L542.8 397.7L540.1 394.1L537.4 390.3L534.5 386.6L531.4 382.7L528.2 378.9L524.9 375.0L521.5 371.1L518.0 367.2L514.4 363.3L510.7 359.4L507.0 355.6L503.2 351.8L499.3 348.1L495.4 344.4L491.5 340.8L487.5 337.2L483.5 333.8L479.6 330.5L475.6 327.2L471.7 324.1L467.8 321.2L464.0 318.3L460.2 315.6L456.5 313.1L452.8 310.7L449.2 308.4L445.8 306.4L442.4 304.5L439.2 302.8L436.1 301.3L433.1 300.0L430.3 298.8L427.6 297.9L425.0 297.2L422.6 296.7L420.4 296.3L418.4 296.2L416.6 296.3L414.9 296.6L413.4 297.0L412.2 297.7L411.1 298.6L410.2 299.7L409.5 301.0L409.1 302.5L408.8 304.1L408.7 305.9L408.9 308.0L409.3 310.2L409.8 312.5L410.6 315.0L411.6 317.7L412.8 320.5L414.1 323.4L415.7 326.5L417.4 329.7L419.4 333.0L421.5 336.4L423.8 340.0L426.2 343.5L428.9 347.2L431.6 350.9L434.5 354.7L437.6 358.6L440.8 362.4L444.1 366.3L447.5 370.2L451.0 374.1L454.6 378.0L458.3 381.8L462.0 385.7L465.8 389.5L469.7 393.2L473.6 396.9L477.5 400.5L481.5 404.0L485.5 407.5L489.4 410.8L493.4 414.0L497.3 417.1L501.2 420.1L505.0 423.0L508.8 425.7L512.5 428.2L516.2 430.6L519.8 432.8L523.2 434.9L526.6 436.8L529.8 438.5L532.9 440.0L535.9 441.3L538.7 442.4L541.4 443.4L544.0 444.1L546.4 444.6L548.6 445.0L550.6 445.1L552.4 445.0L554.1 444.7L555.6 444.2L556.8 443.6L557.9 442.7L558.8 441.6L559.5 440.3L559.9 438.8Z" fill="#82a49c"/><path d="M408.8 304.1L408.7 305.9L408.9 308.0L409.3 310.2L409.8 312.5L410.6 315.0L411.6 317.7L412.8 320.5L414.1 323.4L415.7 326.5L417.4 329.7L419.4 333.0L421.5 336.4L423.8 340.0L426.2 343.5L428.9 347.2L431.6 350.9L434.5 354.7L437.6 358.6L440.8 362.4L444.1 366.3L447.5 370.2L451.0 374.1L454.6 378.0L458.3 381.8L462.0 385.7L465.8 389.5L469.7 393.2L473.6 396.9L477.5 400.5L481.5 404.0L485.5 407.5L489.4 410.8L493.4 414.0L497.3 417.1L501.2 420.1L505.0 423.0L508.8 425.7L512.5 428.2L516.2 430.6L519.8 432.8L523.2 434.9L526.6 436.8L529.8 438.5L532.9 440.0L535.9 441.3L538.7 442.4L541.4 443.4L544.0 444.1L546.4 444.6L548.6 445.0L550.6 445.1L552.4 445.0L554.1 444.7L555.6 444.2L556.8 443.6L557.9 442.7L558.8 441.6L559.5 440.3L559.9 438.8L560.2 437.2L560.2 543.6L408.8 411.0Z" fill="rgb(121,199,215)" fill-opacity="0.45"/></g><polygon points="330.0,342.0 636.0,610.0 645.2,599.5 339.2,331.5" fill="url(#s1g)" clip-path="url(#cc)"/><polygon points="344.7,157.4 650.5,424.6 641.3,435.1 335.5,167.9" fill="url(#s2g)" clip-path="url(#cc)"/><path d="M560.2 275.9A75.7 33.4 0 0 0 559.8 273.6M559.3 271.6A75.7 33.4 0 0 0 558.3 269.4M557.1 267.4A75.7 33.4 0 0 0 555.5 265.3M553.8 263.4A75.7 33.4 0 0 0 551.6 261.4M549.4 259.6A75.7 33.4 0 0 0 546.5 257.7M543.8 256.1A75.7 33.4 0 0 0 540.5 254.4M537.3 253.0A75.7 33.4 0 0 0 533.5 251.4M530.0 250.2A75.7 33.4 0 0 0 525.8 248.9M521.9 247.8A75.7 33.4 0 0 0 517.3 246.8M513.2 246.0A75.7 33.4 0 0 0 508.4 245.2M504.0 244.6A75.7 33.4 0 0 0 499.0 244.1M494.5 243.8A75.7 33.4 0 0 0 489.4 243.5M484.9 243.5A75.7 33.4 0 0 0 479.7 243.5M475.2 243.7A75.7 33.4 0 0 0 470.1 244.1M465.7 244.5A75.7 33.4 0 0 0 460.7 245.2M456.5 245.8A75.7 33.4 0 0 0 451.8 246.8M447.7 247.7A75.7 33.4 0 0 0 443.3 248.8M439.6 250.0A75.7 33.4 0 0 0 435.5 251.4M432.2 252.7A75.7 33.4 0 0 0 428.6 254.4M425.6 255.9A75.7 33.4 0 0 0 422.5 257.7M420.0 259.4A75.7 33.4 0 0 0 417.5 261.3M415.5 263.1A75.7 33.4 0 0 0 413.5 265.2M412.1 267.1A75.7 33.4 0 0 0 410.8 269.3M409.9 271.3A75.7 33.4 0 0 0 409.2 273.5M408.9 275.5A75.7 33.4 0 0 0 408.8 276.9" fill="none" stroke="#0b4aa8" stroke-width="2.5"/><path d="M408.8 276.9A75.7 33.4 0 0 0 560.2 276.9" fill="none" stroke="#0b4aa8" stroke-width="2.5"/><path d="M560.2 464.1A75.7 33.4 0 0 0 559.8 461.8M559.3 459.8A75.7 33.4 0 0 0 558.3 457.6M557.1 455.7A75.7 33.4 0 0 0 555.5 453.5M553.8 451.7A75.7 33.4 0 0 0 551.6 449.6M549.4 447.9A75.7 33.4 0 0 0 546.5 446.0M543.8 444.4A75.7 33.4 0 0 0 540.5 442.6M537.3 441.2A75.7 33.4 0 0 0 533.5 439.7M530.0 438.4A75.7 33.4 0 0 0 525.8 437.1M521.9 436.1A75.7 33.4 0 0 0 517.3 435.0M513.2 434.2A75.7 33.4 0 0 0 508.4 433.4M504.0 432.8A75.7 33.4 0 0 0 499.0 432.3M494.5 432.0A75.7 33.4 0 0 0 489.4 431.8M484.9 431.7A75.7 33.4 0 0 0 479.7 431.8M475.2 432.0A75.7 33.4 0 0 0 470.1 432.3M465.7 432.7A75.7 33.4 0 0 0 460.7 433.4M456.5 434.1A75.7 33.4 0 0 0 451.8 435.0M447.7 435.9A75.7 33.4 0 0 0 443.3 437.1M439.6 438.2A75.7 33.4 0 0 0 435.5 439.6M432.2 441.0A75.7 33.4 0 0 0 428.6 442.6M425.6 444.1A75.7 33.4 0 0 0 422.5 445.9M420.0 447.6A75.7 33.4 0 0 0 417.5 449.6M415.5 451.4A75.7 33.4 0 0 0 413.5 453.5M412.1 455.4A75.7 33.4 0 0 0 410.8 457.6M409.9 459.5A75.7 33.4 0 0 0 409.2 461.8M408.9 463.8A75.7 33.4 0 0 0 408.8 465.1" fill="none" stroke="#1f6fb0" stroke-width="2.5"/><path d="M408.8 465.1A75.7 33.4 0 0 0 509.0 496.7" fill="none" stroke="#0b4aa8" stroke-width="2.5"/><path d="M512.5 496.1A75.7 33.4 0 0 0 517.3 495.2M521.3 494.3A75.7 33.4 0 0 0 525.7 493.1M529.4 492.0A75.7 33.4 0 0 0 533.5 490.6M536.8 489.2A75.7 33.4 0 0 0 540.4 487.6M543.4 486.1A75.7 33.4 0 0 0 546.5 484.3M549.0 482.6A75.7 33.4 0 0 0 551.5 480.6M553.5 478.8A75.7 33.4 0 0 0 555.5 476.7M556.9 474.8A75.7 33.4 0 0 0 558.3 472.6M559.1 470.7A75.7 33.4 0 0 0 559.8 468.4M560.1 466.4A75.7 33.4 0 0 0 560.2 465.1" fill="none" stroke="#1f6fb0" stroke-width="2.5"/><path d="M560.2 437.2L560.3 435.3L560.1 433.3L559.7 431.1L559.2 428.8L558.4 426.3L557.4 423.6L556.2 420.8L554.9 417.8L553.3 414.8L551.6 411.6L549.6 408.3L547.5 404.8L545.2 401.3L542.8 397.7L540.1 394.1L537.4 390.3L534.5 386.6L531.4 382.7L528.2 378.9L524.9 375.0L521.5 371.1L518.0 367.2L514.4 363.3L510.7 359.4L507.0 355.6L503.2 351.8L499.3 348.1L495.4 344.4L491.5 340.8L487.5 337.2L483.5 333.8L479.6 330.5L475.6 327.2L471.7 324.1L467.8 321.2L464.0 318.3L460.2 315.6L456.5 313.1L452.8 310.7L449.2 308.4L445.8 306.4L442.4 304.5L439.2 302.8L436.1 301.3L433.1 300.0L430.3 298.8L427.6 297.9L425.0 297.2L422.6 296.7L420.4 296.3L418.4 296.2L416.6 296.3L414.9 296.6L413.4 297.0L412.2 297.7L411.1 298.6L410.2 299.7L409.5 301.0L409.1 302.5L408.8 304.1" fill="none" stroke="#b41c26" stroke-width="2.4" stroke-dasharray="4.4 3.8"/><path d="M560.2 437.2L560.3 435.3L560.1 433.3L559.7 431.1L559.2 428.8L558.4 426.3L557.4 423.6L556.2 420.8L554.9 417.8L553.3 414.8L551.6 411.6L549.6 408.3L547.5 404.8L545.2 401.3L542.8 397.7L540.1 394.1L537.4 390.3L534.5 386.6L531.4 382.7L528.2 378.9L524.9 375.0L521.5 371.1L518.0 367.2L514.4 363.3L510.7 359.4L507.0 355.6L503.2 351.8L499.3 348.1L495.4 344.4L491.5 340.8L487.5 337.2L483.5 333.8L479.6 330.5L475.6 327.2L471.7 324.1L467.8 321.2L464.0 318.3L460.2 315.6L456.5 313.1L452.8 310.7L449.2 308.4L445.8 306.4L442.4 304.5L439.2 302.8L436.1 301.3L433.1 300.0L430.3 298.8L427.6 297.9L425.0 297.2L422.6 296.7L420.4 296.3L418.4 296.2L416.6 296.3L414.9 296.6L413.4 297.0L412.2 297.7L411.1 298.6L410.2 299.7L409.5 301.0L409.1 302.5L408.8 304.1" fill="none" stroke="#7c1c3c" stroke-width="2.5" stroke-dasharray="4.4 3.8" clip-path="url(#s1)"/><path d="M409.8 300.3L409.3 301.7L408.9 303.2L408.8 304.8L408.8 306.7L409.0 308.7L409.4 310.8L410.0 313.1L410.8 315.6L411.8 318.2L412.9 320.9L414.3 323.8L415.8 326.8L417.5 329.9L419.4 333.1L421.4 336.3L423.6 339.7L426.0 343.2L428.5 346.7L431.1 350.3L433.9 353.9L436.8 357.6L439.8 361.3L443.0 365.1L446.2 368.8L449.6 372.6L453.0 376.3L456.5 380.0L460.1 383.8L463.8 387.4L467.5 391.1L471.2 394.7L475.0 398.2L478.8 401.6L482.6 405.0L486.4 408.3L490.2 411.5L494.0 414.6L497.8 417.5L501.6 420.4L505.3 423.1L508.9 425.7L512.5 428.2L516.0 430.5L519.4 432.6L522.8 434.6L526.0 436.5L529.2 438.2L532.2 439.7L535.1 441.0L537.9 442.1L540.5 443.1L543.0 443.8L545.4 444.4L547.6 444.8L549.6 445.1L551.5 445.1L553.2 444.9L554.7 444.6L556.1 444.0L557.2 443.3L558.2 442.4L559.0 441.3L559.6 440.0L560.0 438.5L560.2 436.9L560.2 435.1L560.1 433.2L559.7 431.0L559.2 428.8L558.4 426.4" fill="none" stroke="#e01010" stroke-width="2.4"/><path d="M531.8 250.7L531.8 438.9" stroke="#8b1426" stroke-width="2.4" stroke-dasharray="4.8 4.6" fill="none"/><path d="M432.3 325.1L531.8 383.2" stroke="#0c1028" stroke-width="2.5" stroke-dasharray="4.5 3.4" fill="none"/><path d="M531.8 383.2L536.7 416.8" stroke="#0c1810" stroke-width="2.5" stroke-dasharray="2.5 2.5" fill="none"/><circle cx="484.5" cy="276.9" r="2.3" fill="#111"/><circle cx="484.5" cy="465.1" r="2.0" fill="#1d3a3a"/><circle cx="531.8" cy="250.7" r="2.3" fill="#151525"/><circle cx="531.8" cy="383.2" r="2.9" fill="#2a4a30"/><circle cx="432.3" cy="325.1" r="2.9" fill="#3a5048"/><circle cx="536.7" cy="416.8" r="2.9" fill="#2c5638"/><circle cx="531.8" cy="438.9" r="1.6" fill="#5a2020"/><text x="538.5" y="242.3" font-family='"Liberation Serif", serif' font-style="italic" font-size="19" fill="#26263a" fill-opacity="1">M</text><text x="491" y="268.7" font-family='"Liberation Serif", serif' font-style="italic" font-size="19" fill="#1a2a28" fill-opacity="1">C<tspan font-style="normal" font-size="13.3" dy="2.6" dx="-0.8">1</tspan></text><text x="412.5" y="325.3" font-family='"Liberation Serif", serif' font-style="italic" font-size="19" fill="#4f7a68" fill-opacity="1">F<tspan font-style="normal" font-size="13.3" dy="2.6" dx="-0.8">1</tspan></text><text x="545.5" y="387.5" font-family='"Liberation Serif", serif' font-style="italic" font-size="19" fill="#2a5a40" fill-opacity="1">P</text><text x="515.5" y="424" font-family='"Liberation Serif", serif' font-style="italic" font-size="19" fill="#41705e" fill-opacity="1">F<tspan font-style="normal" font-size="13.3" dy="2.6" dx="-0.8">2</tspan></text><text x="539" y="429.8" font-family='"Liberation Serif", serif' font-style="italic" font-size="19" fill="#1f4a3a" fill-opacity="1">N</text><text x="501.3" y="470.6" font-family='"Liberation Serif", serif' font-style="italic" font-size="19" fill="#2a5a5a" fill-opacity="1">C<tspan font-style="normal" font-size="13.3" dy="2.6" dx="-0.8">2</tspan></text></svg>
<svg class="abs" style="left:709px;top:102px" width="318" height="552" viewBox="709 102 318 552"><ellipse cx="859.7" cy="315" rx="69.9" ry="96.4" fill="#ffe6e6" stroke="#f41414" stroke-width="1.5"/><path d="M859.4 248.9L915.4 372.6L859.4 381.2" fill="none" stroke="#1c1c1c" stroke-width="1.8" stroke-linejoin="round"/><circle cx="859.4" cy="248.9" r="2.7" fill="#2c2c2c"/><circle cx="859.4" cy="381.2" r="2.7" fill="#2c2c2c"/><circle cx="915.4" cy="372.6" r="2.7" fill="#2c2c2c"/><text x="838.4" y="249.2" font-family='"Liberation Serif", serif' font-style="italic" font-size="19" fill="#444">F<tspan font-style="normal" font-size="13.3" dy="2.6" dx="-0.8">1</tspan></text><text x="838.4" y="389.5" font-family='"Liberation Serif", serif' font-style="italic" font-size="19" fill="#444">F<tspan font-style="normal" font-size="13.3" dy="2.6" dx="-0.8">2</tspan></text><text x="929.3" y="377.1" font-family='"Liberation Serif", serif' font-style="italic" font-size="19" fill="#444">P</text><text x="721.5" y="516.2" font-family='"Liberation Serif", serif' font-weight="bold" font-style="italic" font-size="17.5" fill="#3a1414" textLength="14.5" lengthAdjust="spacingAndGlyphs">P</text><text x="738.3" y="516.2" font-family='"Liberation Serif", serif' font-weight="bold" font-style="italic" font-size="17.5" fill="#3a1414" textLength="13.2" lengthAdjust="spacingAndGlyphs">F</text><text x="751.9" y="518.9000000000001" font-family='"Liberation Serif", serif' font-weight="bold" font-size="12" fill="#3a1414" textLength="4.6" lengthAdjust="spacingAndGlyphs">1</text><text x="760.3000000000001" y="521.2" font-family='"Liberation Serif", serif' font-size="27.8" fill="#3a1414">+</text><text x="781.9" y="516.2" font-family='"Liberation Serif", serif' font-weight="bold" font-style="italic" font-size="17.5" fill="#3a1414" textLength="14.5" lengthAdjust="spacingAndGlyphs">P</text><text x="798.2" y="516.2" font-family='"Liberation Serif", serif' font-weight="bold" font-style="italic" font-size="17.5" fill="#3a1414" textLength="13.2" lengthAdjust="spacingAndGlyphs">F</text><text x="810.3" y="518.9000000000001" font-family='"Liberation Serif", serif' font-weight="bold" font-size="12" fill="#3a1414" textLength="6.1" lengthAdjust="spacingAndGlyphs">2</text><text x="821.4" y="521.3" font-family='"Liberation Serif", serif' font-size="28.4" fill="#3a1414">=</text><text x="844.6" y="516.2" font-family='"Liberation Serif", serif' font-weight="bold" font-size="17.5" fill="#3a1414" textLength="33.3" lengthAdjust="spacingAndGlyphs">1.95</text><text x="884.0" y="521.2" font-family='"Liberation Serif", serif' font-size="27.8" fill="#3a1414">+</text><text x="905.5" y="516.2" font-family='"Liberation Serif", serif' font-weight="bold" font-size="17.5" fill="#3a1414" textLength="34.5" lengthAdjust="spacingAndGlyphs">0.81</text><text x="946.4" y="521.3" font-family='"Liberation Serif", serif' font-size="28.4" fill="#3a1414">=</text><text x="968.8" y="516.2" font-family='"Liberation Serif", serif' font-weight="bold" font-size="17.5" fill="#3a1414" textLength="35.5" lengthAdjust="spacingAndGlyphs">2.76</text></svg>
</body></html>
